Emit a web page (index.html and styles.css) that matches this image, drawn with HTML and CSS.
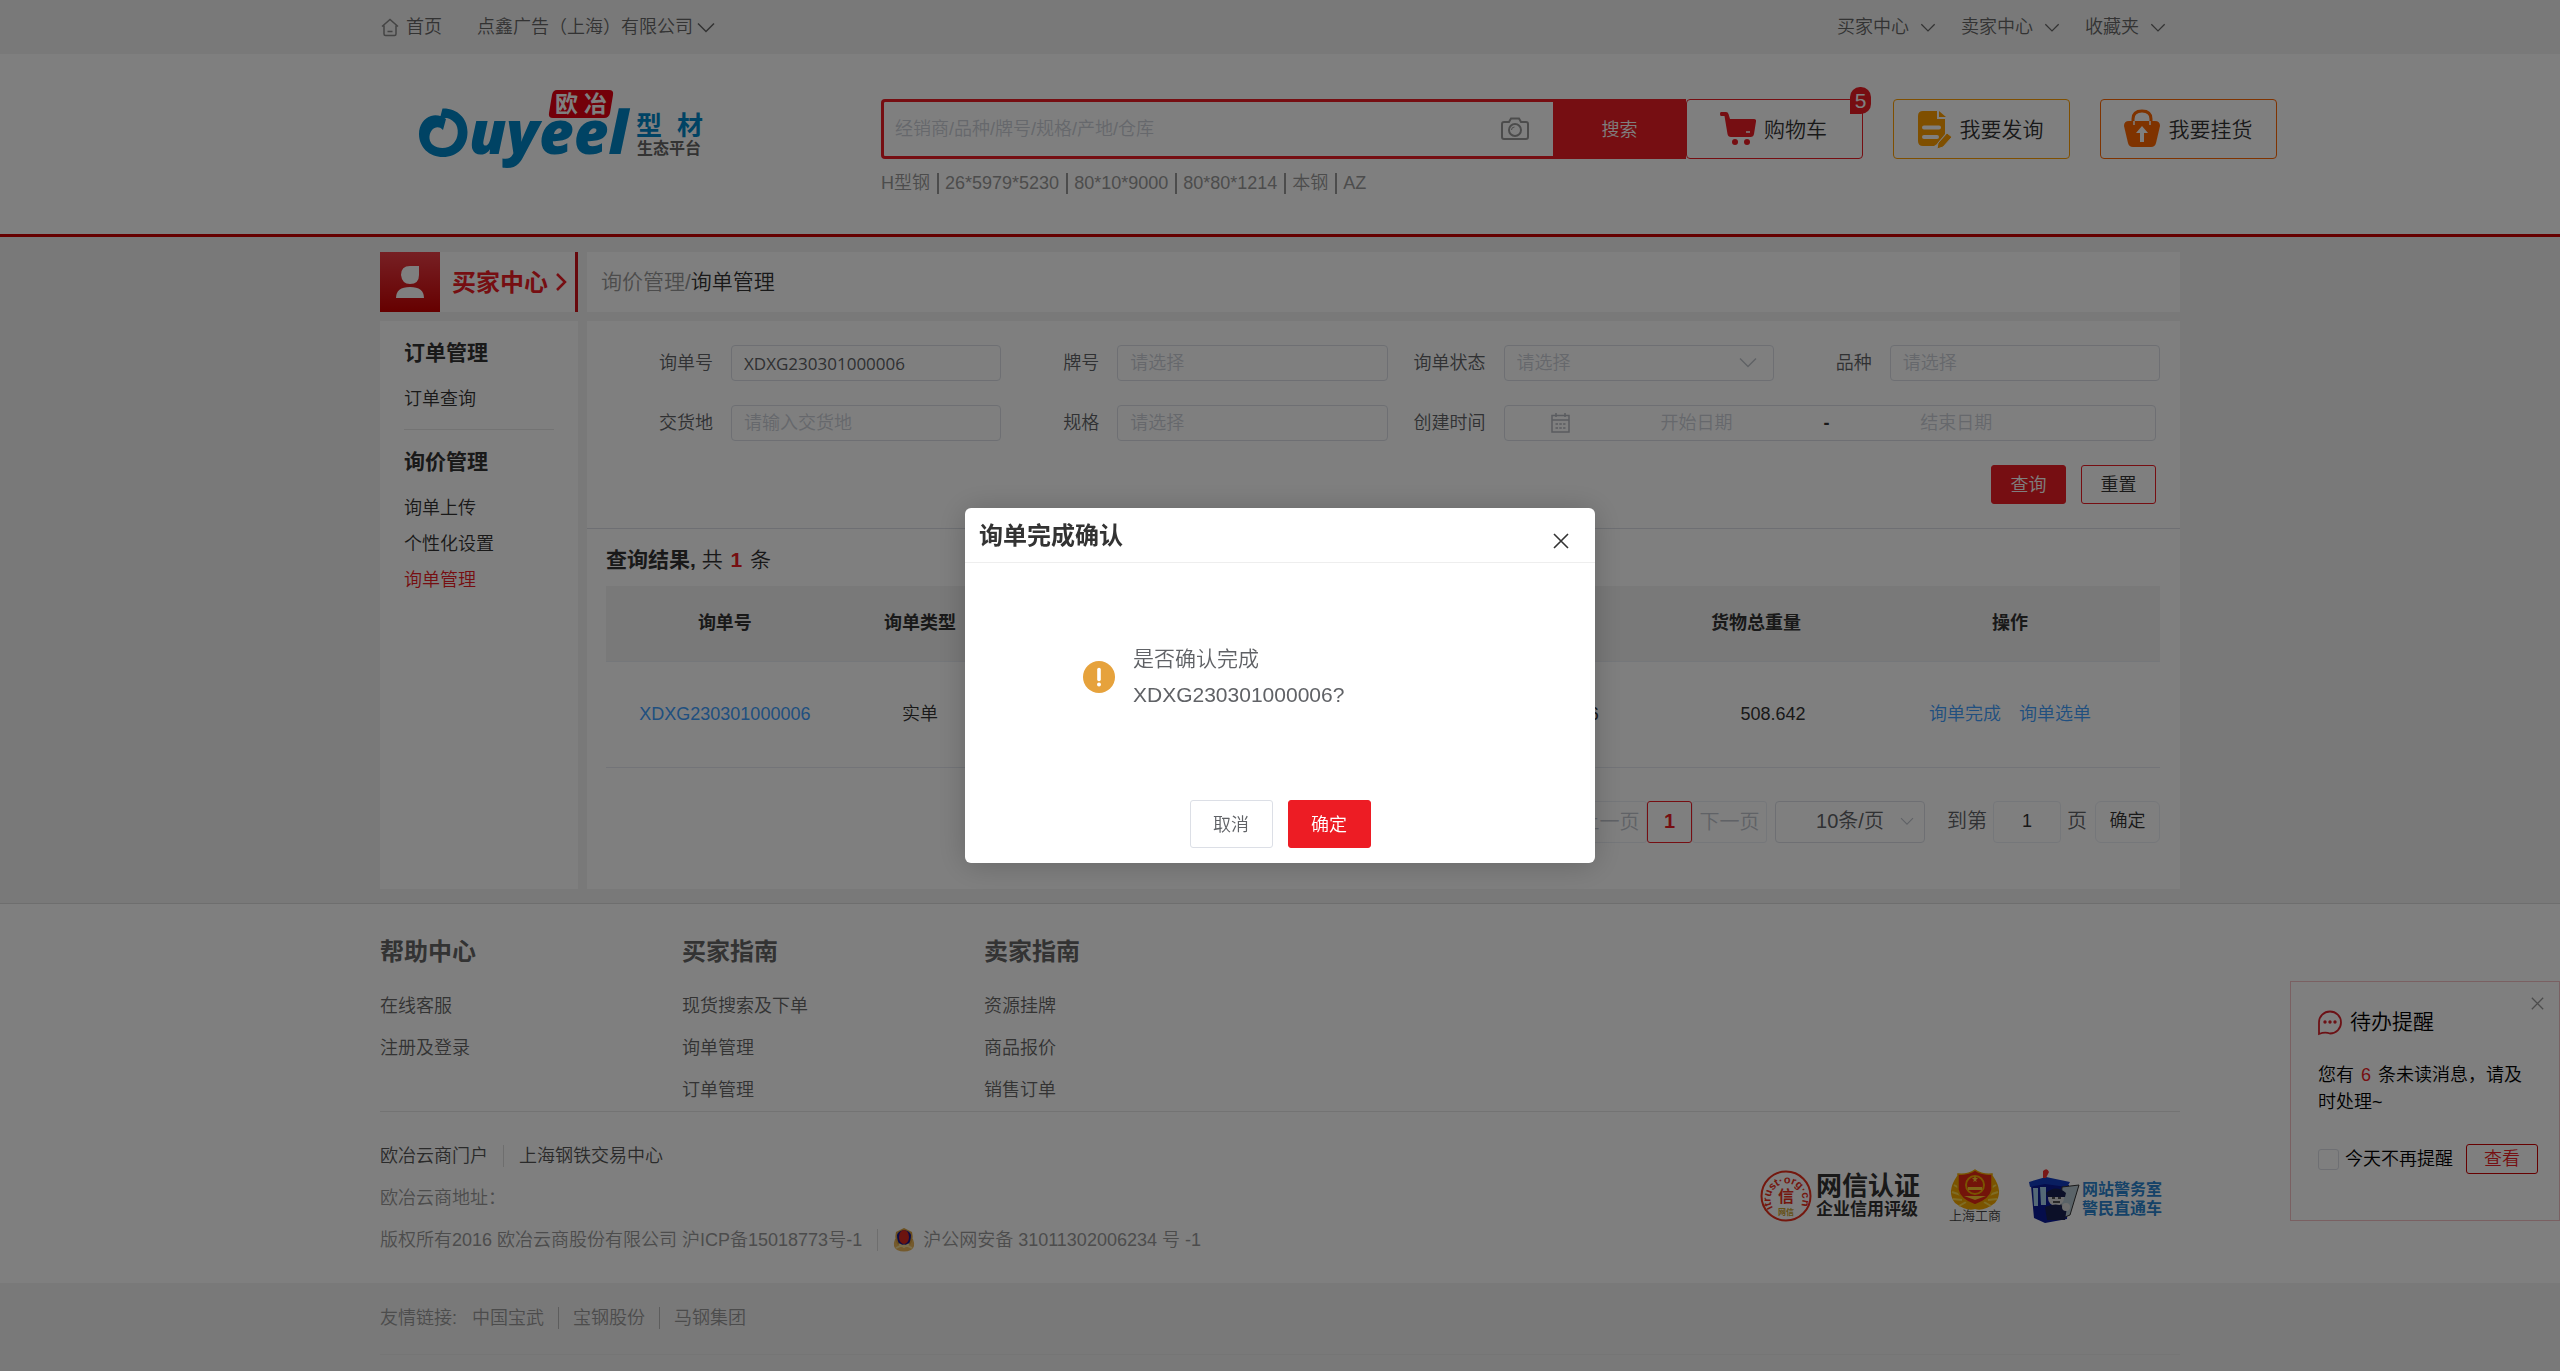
FILE: index.html
```html
<!DOCTYPE html>
<html lang="zh-CN">
<head>
<meta charset="utf-8">
<title>询单管理</title>
<link rel="stylesheet" href="styles.css">
</head>
<body>
<svg class="defs" width="0" height="0" aria-hidden="true">
  <symbol id="chevron" viewBox="0 0 18 12"><path d="M1 1.500l8 8 8-8" fill="none" stroke="currentColor" stroke-width="1.500"/></symbol>
  <symbol id="cross" viewBox="0 0 16 16"><path d="M1 1l14 14M15 1L1 15" fill="none" stroke="currentColor" stroke-width="1.600"/></symbol>
</svg>

<div class="topbar">
  <div class="wrap topbar-inner">
    <a class="top-link home" href="#">
      <svg width="18" height="19" viewBox="0 0 18 19" fill="none" stroke="#888" stroke-width="1.500"><path d="M1 8.500L9 1.500l8 7M3 7.500V16q0 1.500 1.500 1.500h9Q15 17.500 15 16V7.500M6.500 13.500h5"/></svg>首页</a>
    <a class="top-link company" href="#">点鑫广告（上海）有限公司<svg width="18" height="12"><use href="#chevron"/></svg></a>
    <nav class="top-right">
      <a class="top-link" href="#">买家中心<svg width="16" height="10"><use href="#chevron"/></svg></a>
      <a class="top-link" href="#">卖家中心<svg width="16" height="10"><use href="#chevron"/></svg></a>
      <a class="top-link" href="#">收藏夹<svg width="16" height="10"><use href="#chevron"/></svg></a>
    </nav>
  </div>
</div>

<header class="header">
  <div class="wrap header-inner">
    <a class="logo" href="#" aria-label="欧冶型材生态平台">
      <svg width="290" height="76" viewBox="0 0 290 76">
        <path d="M23.500 18.500C38 18 48.500 28 48.500 42 48.500 57 38 67 24 67 10 67 0 57 0 44 0 35 5 28 12 26 17 24 23 26 27 29l-3 11C20 36 16 37 13 40 9 45 10 52 14 55 19 59 29 59 34 54 40 48 40 38 36 33 32 28 27 27 21 28z" fill="#0087c8"/>
        <text x="50" y="64" font-family="Open Sans" font-weight="800" font-style="italic" font-size="60" fill="#0087c8">uyeel</text>
        <path d="M138 0h52q5 0 4 5l-3 18q-1 5-6 5h-51q-5 0-4-5l3-18q1-5 5-5z" fill="#e60012"/>
        <text x="136" y="22" class="cjk" font-size="23" fill="#fff">欧</text>
        <text x="165" y="22" class="cjk" font-size="23" fill="#fff">冶</text>
        <text x="217" y="45" class="cjk" font-size="26" fill="#0087c8">型</text>
        <text x="258" y="45" class="cjk" font-size="26" fill="#0087c8">材</text>
        <text x="218" y="64" class="cjk" font-size="16" fill="#666">生态平台</text>
      </svg>
    </a>
    <form class="search">
      <div class="search-row">
        <div class="search-box">
          <input type="text" aria-label="搜索" placeholder="经销商/品种/牌号/规格/产地/仓库">
          <svg width="28" height="24" viewBox="0 0 28 24" fill="none" stroke="#999" stroke-width="2"><path d="M3 5h5l2-3.500h8L20 5h5q2 0 2 2v13q0 2-2 2H3q-2 0-2-2V7q0-2 2-2z"/><circle cx="14" cy="13" r="6"/><path d="M10.500 13q0-3 3-3" stroke-width="1"/></svg>
        </div>
        <button type="button" class="search-btn">搜索</button>
      </div>
      <div class="keywords">
        <a href="#">H型钢</a><a href="#">26*5979*5230</a><a href="#">80*10*9000</a><a href="#">80*80*1214</a><a href="#">本钢</a><a href="#">AZ</a>
      </div>
    </form>
    <div class="actions">
      <button type="button" class="action cart">
        <svg width="36" height="34" viewBox="0 0 36 34" fill="#ed1c24"><path d="M1 0h5q2 0 2.500 2L10 7h24q2.500 0 2 2.500L34 22q-.5 3-3.500 3H11q-3 0-3.500-3L4.500 4H1Q0 4 0 2t1-2z"/><path d="M26 20h4" stroke="#fff" stroke-width="1.500"/><circle cx="15" cy="30" r="3"/><circle cx="27" cy="30" r="3"/></svg>购物车<span class="badge">5</span></button>
      <button type="button" class="action inquiry">
        <svg width="34" height="37" viewBox="0 0 34 37"><path d="M5 0h14v8h8v15l-8 10-3 2H5q-5 0-5-5V5q0-5 5-5zM21 0l7 6h-7z" fill="#ff9f00"/><path d="M6 16.500h15M6 26h13" stroke="#fff" stroke-width="4" stroke-linecap="round"/><path d="M29 22l5 4-9 10-6 2 1-6z" fill="#ff9f00" stroke="#fff" stroke-width="1"/></svg>我要发询</button>
      <button type="button" class="action listing">
        <svg width="38" height="38" viewBox="0 0 38 38"><path d="M10 17V9q0-8 9-8t9 8v8" fill="none" stroke="#f60" stroke-width="3"/><path d="M6 11h26q5 0 5 5l-4 17q-1 4-5 4H10q-4 0-5-4L1 16q0-5 5-5z" fill="#f60"/><path d="M11 11v4M27 11v4" stroke="#fff" stroke-width="1.500"/><path d="M19 16l6 7h-4v9h-4v-9h-4z" fill="#fff"/></svg>我要挂货</button>
    </div>
  </div>
</header>

<div class="wrap page">
  <div class="col-side">
    <a class="center-title" href="#">
      <span class="avatar"><svg width="30" height="32" viewBox="0 0 30 32" fill="#fff"><path d="M15 0h9v9q0 9-9 9-8 0-9-9Q6 0 15 0zM1 32q0-11 14-11t14 11z"/></svg></span>
      <span class="center-text">买家中心</span>
      <svg width="12" height="18" viewBox="0 0 12 18"><path d="M2 1l8 8-8 8" fill="none" stroke="#ed1c24" stroke-width="2.500"/></svg>
    </a>
    <nav class="sidebar">
      <h2>订单管理</h2>
      <a href="#">订单查询</a>
      <hr>
      <h2>询价管理</h2>
      <a href="#">询单上传</a>
      <a href="#">个性化设置</a>
      <a href="#" class="active">询单管理</a>
    </nav>
  </div>

  <main class="col-main">
    <div class="crumb"><a href="#">询价管理</a>/<span>询单管理</span></div>
    <section class="panel">
      <form class="filter">
        <div class="field"><label for="no">询单号</label><input id="no" type="text" class="latin" value="XDXG230301000006"></div>
        <div class="field"><label for="brand">牌号</label><input id="brand" type="text" placeholder="请选择"></div>
        <div class="field"><label for="state">询单状态</label><div class="select"><select id="state"><option>请选择</option></select><svg width="18" height="12"><use href="#chevron"/></svg></div></div>
        <div class="field"><label for="kind">品种</label><input id="kind" type="text" placeholder="请选择"></div>
        <div class="field"><label for="place">交货地</label><input id="place" type="text" placeholder="请输入交货地"></div>
        <div class="field"><label for="spec">规格</label><input id="spec" type="text" placeholder="请选择"></div>
        <div class="field wide"><label for="from">创建时间</label>
          <div class="range">
            <svg width="19" height="20" viewBox="0 0 19 20" fill="none" stroke="#b4b8c0" stroke-width="1.500"><path d="M1 2.500h17v16.500H1zM1 7h17M5 0v4M14 0v4"/><path d="M4.500 11h10M4.500 15h10" stroke-dasharray="2.500 1.300"/></svg>
            <input id="from" type="text" placeholder="开始日期"><span>-</span><input type="text" aria-label="结束日期" placeholder="结束日期">
          </div>
        </div>
        <div class="filter-buttons">
          <button type="button" class="btn primary">查询</button>
          <button type="button" class="btn outline">重置</button>
        </div>
      </form>
      <div class="results">
        <p class="summary"><b>查询结果,</b> 共 <b class="count">1</b> 条</p>
        <table>
          <colgroup><col class="c-no"><col class="c-type"><col class="c-mid"><col class="c-weight"><col class="c-op"></colgroup>
          <thead><tr><th>询单号</th><th>询单类型</th><th></th><th>货物总重量</th><th>操作</th></tr></thead>
          <tbody><tr><td><a href="#">XDXG230301000006</a></td><td>实单</td><td class="mid">6</td><td class="weight">508.642</td><td><span class="ops"><a href="#">询单完成</a><a href="#">询单选单</a></span></td></tr></tbody>
        </table>
        <div class="pager">
          <button type="button" class="step" disabled>上一页</button><button type="button" class="current">1</button><button type="button" class="step" disabled>下一页</button>
          <div class="select size"><select aria-label="每页条数"><option>10条/页</option></select><svg width="14" height="9"><use href="#chevron"/></svg></div>
          <label for="goto">到第</label><input id="goto" type="text" value="1"><span>页</span>
          <button type="button" class="go">确定</button>
        </div>
      </div>
    </section>
  </main>
</div>

<footer class="footer">
  <div class="wrap">
    <div class="guides">
      <div><h3>帮助中心</h3><a href="#">在线客服</a><a href="#">注册及登录</a></div>
      <div><h3>买家指南</h3><a href="#">现货搜索及下单</a><a href="#">询单管理</a><a href="#">订单管理</a></div>
      <div><h3>卖家指南</h3><a href="#">资源挂牌</a><a href="#">商品报价</a><a href="#">销售订单</a></div>
    </div>
    <div class="legal">
      <div class="legal-text">
        <p class="dark"><a href="#">欧冶云商门户</a><i></i><a href="#">上海钢铁交易中心</a></p>
        <p>欧冶云商地址：</p>
        <p>版权所有2016 欧冶云商股份有限公司 沪ICP备15018773号-1<i></i>
          <svg class="police" width="22" height="24" viewBox="0 0 22 24"><path d="M2 11Q-1 19 4 22q7 3 14 0 5-3 2-11z" fill="#e8b45a"/><path d="M11 0l8 4q2 8-2 13H5Q1 12 3 4z" fill="#d8a040"/><path d="M11 2q6 1 7 5 0 6-3 10H7Q4 13 4 7q1-4 7-5z" fill="#16168c"/><ellipse cx="11" cy="9" rx="5" ry="7" fill="#d8281e"/><path d="M6 16l5 3 5-3M3 20q8-5 16 0" fill="none" stroke="#f5dc96" stroke-width="2"/></svg>沪公网安备 31011302006234 号 -1</p>
      </div>
      <div class="certs">
        <svg width="162" height="52" viewBox="0 0 162 52">
          <circle cx="26" cy="26" r="24.500" fill="none" stroke="#e8301c" stroke-width="2"/>
          <path id="arc" d="M13 38A16 16 0 1 1 40 38" fill="none"/>
          <text font-family="Liberation Sans" font-size="11" font-weight="700" fill="#e8301c"><textPath href="#arc">itrust·org·cn</textPath></text>
          <text x="18" y="32" class="cjk" font-size="16" fill="#e8301c">信</text>
          <text x="18" y="45" class="cjk" font-size="8" fill="#c9a02a">网信</text>
          <text x="56" y="25" class="cjk" font-size="26" fill="#333">网信认证</text>
          <text x="56" y="45" class="cjk" font-size="17" fill="#333">企业信用评级</text>
        </svg>
        <svg width="54" height="52" viewBox="0 0 54 52">
          <path d="M9 6Q-2 22 7 33q12 9 20 6 8 3 20-6 9-11-2-27z" fill="#f5a800"/>
          <path d="M6 15l7 4M4 22l9 3M5 29l9 1M11 36l7-4M48 15l-7 4M50 22l-9 3M49 29l-9 1M43 36l-7-4" stroke="#ffd94a" stroke-width="2"/>
          <path d="M27 0q7 5 17 4v16Q42 30 27 35 12 30 10 20V4q10 1 17-4z" fill="#e62814" stroke="#f5a800" stroke-width="1.500"/>
          <circle cx="27" cy="15" r="9" fill="none" stroke="#f5a800" stroke-width="2"/><path d="M20 17h14v3H20zM26 8l1-2 1 2h2l-2 2 1 2-2-1-2 1 1-2-2-2zM16 26l11 4 11-4" fill="#ffc830"/>
          <text x="1" y="50" class="song" font-size="13" fill="#444">上海工商</text>
        </svg>
        <svg width="136" height="54" viewBox="0 0 136 54">
          <path d="M3 16l16-5 22 4-2 34-22 4-11-5z" fill="#0a1a96"/><path d="M1 12L18 7l24 5-3 5-22-3-15 3z" fill="#123cc0"/>
          <path d="M5 18h5v18H6zM12 17h6v18h-5z" fill="#a8d2ec"/><path d="M34 17l17-2-9 30-10 4z" fill="#b4c6d0" stroke="#333" stroke-width="1"/>
          <path d="M15 1q4-4 6 1l-3 6h-3z" fill="#f03030"/><circle cx="28" cy="28" r="8" fill="#ddd"/><path d="M18 23q10-9 20 0l-1 4H20z" fill="#182050"/><path d="M17 37q10-5 22 0l-2 13H19z" fill="#182050"/><path d="M24 28h3M30 28h3M25 32h7" stroke="#222" stroke-width="1.500"/><circle cx="38" cy="37" r="4" fill="#ddd"/>
          <text x="54" y="25" class="cjk" font-size="16" fill="#2b85d0">网站警务室</text>
          <text x="54" y="44" class="cjk" font-size="16" fill="#2b85d0">警民直通车</text>
        </svg>
      </div>
    </div>
  </div>
</footer>
<div class="friends">
  <div class="wrap"><p>友情链接:<a href="#" class="first">中国宝武</a><i></i><a href="#">宝钢股份</a><i></i><a href="#">马钢集团</a></p></div>
</div>

<aside class="notice">
  <button type="button" class="notice-close" aria-label="关闭提醒"><svg width="13" height="13"><use href="#cross"/></svg></button>
  <h4><svg width="24" height="25" viewBox="0 0 24 25"><path d="M1 24V12.500A11 11 0 1 1 12 23.500q-5-2-11 .5z" fill="none" stroke="#d9232b" stroke-width="1.800"/><g fill="#d9232b"><circle cx="7" cy="12" r="1.700"/><circle cx="12" cy="12" r="1.700"/><circle cx="17" cy="12" r="1.700"/></g></svg>待办提醒</h4>
  <p>您有 <em>6</em> 条未读消息，请及时处理~</p>
  <div class="notice-foot"><input type="checkbox" id="mute"><label for="mute">今天不再提醒</label><button type="button">查看</button></div>
</aside>

<div class="shade">
  <div class="dialog" role="dialog" aria-labelledby="dlg-title">
    <div class="dialog-head"><h1 id="dlg-title">询单完成确认</h1><button type="button" class="dialog-close" aria-label="关闭"><svg width="16" height="16"><use href="#cross"/></svg></button></div>
    <div class="dialog-body">
      <svg width="32" height="32" viewBox="0 0 32 32"><circle cx="16" cy="16" r="16" fill="#e6a23c"/><path d="M16 8.500v10" stroke="#fff" stroke-width="3.600" stroke-linecap="round"/><circle cx="16" cy="23.500" r="2" fill="#fff"/></svg>
      <p>是否确认完成<br>XDXG230301000006?</p>
    </div>
    <div class="dialog-foot"><button type="button" class="cancel">取消</button><button type="button" class="confirm">确定</button></div>
  </div>
</div>
</body>
</html>
```
FILE: styles.css
```css
* { box-sizing: border-box; }
body {
  margin: 0;
  min-height: 100vh;
  background: #f2f2f2;
  color: #333;
  font: 350 18px/27px "Liberation Sans", "Noto Sans CJK SC", sans-serif;
}
h1, h2, h3, h4, p { margin: 0; }
a { color: inherit; text-decoration: none; }
button, input, select { font: inherit; color: inherit; margin: 0; }
button { padding: 2px 0 0; background: #fff; border: 1px solid #dcdfe6; border-radius: 3px; }
input::placeholder { color: #ccd0d8; opacity: 1; }
svg { display: block; flex: none; overflow: visible; }
.defs { position: absolute; }
.cjk { font-family: "Noto Sans CJK SC", sans-serif; font-weight: 700; }
.song { font-family: "Liberation Serif", "Noto Sans CJK SC", serif; }
.wrap { max-width: 1800px; margin: 0 auto; }

/* top bar */
.topbar { color: #666; }
.topbar-inner { display: flex; align-items: center; height: 54px; padding-top: 1px; }
.top-link { display: flex; align-items: center; gap: 11px; white-space: nowrap; }
.home { gap: 7px; padding-left: 1px; }
.company { gap: 4px; margin-left: 35px; }
.top-right { display: flex; gap: 25px; margin-left: auto; padding-right: 14px; }

/* header */
.header { background: #fff; border-bottom: 3px solid #c00; }
.header-inner { display: flex; align-items: flex-start; height: 180px; padding-top: 36px; }
.logo { flex: 0 0 501px; padding-left: 39px; }
.search { flex: 0 0 805px; padding-top: 9px; }
.search-row { display: flex; }
.search-box {
  display: flex;
  align-items: center;
  flex: 1;
  height: 60px;
  padding: 0 24px 0 11px;
  border: 3px solid #ed1c24;
  border-right: 0;
  border-radius: 4px 0 0 4px;
}
.search-box input { flex: 1; min-width: 0; border: 0; padding: 0; background: none; outline: 0; }
.search-btn { width: 133px; background: #ed1c24; color: #fff; border: 0; border-radius: 0; }
.keywords { display: flex; align-items: center; margin-top: 14px; color: #999; }
.keywords a { line-height: 21px; }
.keywords a + a { margin-left: 7px; padding-left: 6px; border-left: 2px solid #999; }
.actions { display: flex; gap: 30px; padding-top: 9px; }
.action {
  position: relative;
  display: flex;
  align-items: center;
  justify-content: center;
  gap: 8px;
  width: 177px;
  height: 60px;
  padding: 0 2px 0 0;
  border-radius: 4px;
  font-size: 21px;
  white-space: nowrap;
}
.cart { border-color: #ed1c24; }
.inquiry { border-color: #ff9f00; }
.listing { border-color: #f60; }
.badge {
  position: absolute;
  top: -13px;
  right: -9px;
  width: 21px;
  border-radius: 10px 10px 10px 0;
  background: #ed1c24;
  color: #fff;
}

/* page columns */
.page { display: flex; gap: 9px; padding: 15px 0 14px; }
.col-side { display: flex; flex-direction: column; gap: 9px; flex: 0 0 198px; }
.col-main { display: flex; flex-direction: column; gap: 9px; flex: 1; min-width: 0; }
.center-title {
  display: flex;
  align-items: center;
  height: 60px;
  background: #fff;
  border-right: 3px solid #d01018;
  color: #ed1c24;
  font-size: 24px;
  font-weight: 700;
}
.avatar {
  display: flex;
  align-items: center;
  justify-content: center;
  width: 60px;
  height: 60px;
  background: linear-gradient(#ee4048, #c00);
}
.center-text { margin: 0 7px 0 12px; }
.sidebar { flex: 1; padding: 14px 24px; background: #fff; }
.sidebar h2 { font-size: 21px; line-height: 36px; }
.sidebar a { display: block; line-height: 36px; }
.sidebar h2 + a { margin-top: 10px; }
.sidebar hr { margin: 12px 0 14px; border: 0; border-top: 1px solid #e6e6e6; }
.sidebar .active { color: #ed1c24; }
.crumb { padding: 0 14px; background: #fff; color: #999; font-size: 21px; line-height: 60px; }
.crumb span { color: #333; }
.panel { flex: 1; padding-bottom: 46px; background: #fff; }

/* filter form */
.filter {
  display: grid;
  grid-template-columns: repeat(4, 1fr);
  row-gap: 24px;
  padding: 24px 20px 24px 28px;
  border-bottom: 1px solid #dcdfe6;
}
.field { display: flex; align-items: center; color: #606266; }
.field label { flex: 0 0 116px; padding-right: 18px; text-align: right; }
.field > input, .select, .range {
  flex: 1;
  min-width: 0;
  height: 36px;
  border: 1px solid #dcdfe6;
  border-radius: 4px;
  background: #fff;
}
.field > input { padding: 0 12px; }
.latin { font-family: "Open Sans", "Noto Sans CJK SC", sans-serif; font-size: 17px; font-weight: 400; }
.select { display: flex; align-items: center; padding-right: 16px; color: #c0c4cc; }
.select select { flex: 1; min-width: 0; appearance: none; border: 0; background: none; padding: 0 12px; }
.field .select select { color: #ccd0d8; }
.wide { grid-column: span 2; padding-right: 4px; }
.range { display: flex; align-items: center; padding-left: 46px; }
.range input { width: 42%; min-width: 0; border: 0; padding: 0; background: none; text-align: center; }
.range span { color: #333; font-weight: 700; }
.filter-buttons { grid-column: 1 / -1; display: flex; justify-content: flex-end; gap: 15px; padding-right: 4px; }
.btn { width: 75px; height: 39px; }
.primary { background: #ed1c24; border-color: #ed1c24; color: #fff; }
.outline { border-color: #ed1c24; }

/* results */
.results { padding: 13px 20px 0 19px; }
.summary { margin-bottom: 8px; font-size: 21px; line-height: 36px; }
.count { margin: 0 2px; color: #ed1c24; }
table { width: 100%; table-layout: fixed; border-collapse: collapse; text-align: center; }
th { height: 75px; padding: 0; background: #f2f2f2; border-bottom: 1px solid #ebeef5; }
td { height: 106px; padding: 0; border-bottom: 1px solid #e6e9f0; }
td a { color: #409eff; }
.c-no { width: 15.3%; }
.c-type { width: 9.8%; }
.c-weight { width: 13.4%; }
.c-op { width: 19.3%; }
.mid { text-align: right; padding-right: 53px; }
.weight { padding-left: 34px; }
.ops { display: flex; justify-content: center; gap: 18px; }
.pager { display: flex; align-items: center; justify-content: flex-end; margin-top: 33px; font-size: 20px; color: #606266; }
.pager button, .pager input, .size { height: 42px; }
.pager .step { width: 75px; color: #c0c4cc; border-color: #ebeef5; }
.pager .current { width: 45px; padding: 0; color: #ed1c24; border-color: #ed1c24; font-weight: 700; }
.size { flex: 0 0 150px; margin: 0 22px 0 8px; padding-right: 10px; }
.size select { padding: 0 0 0 24px; color: #606266; text-align: center; }
.pager input { width: 68px; margin: 0 6px; padding: 0; border: 1px solid #ebeef5; border-radius: 4px; font-size: 18px; text-align: center; color: #333; }
.pager .go { width: 65px; margin-left: 8px; padding: 0; border-color: #ebeef5; border-radius: 6px; font-size: 18px; color: #333; }

/* footer */
.footer { background: #fff; border-top: 1px solid #ddd; color: #666; }
.guides { display: flex; padding-top: 30px; border-bottom: 1px solid #e6e6e6; }
.guides div { flex: 0 0 302px; }
.guides h3 { margin-bottom: 15px; font-size: 24px; line-height: 36px; }
.guides a { display: block; line-height: 42px; }
.legal { display: flex; justify-content: space-between; padding: 23px 0 22px; color: #999; }
.legal p { display: flex; align-items: center; line-height: 42px; white-space: pre; }
.legal .dark { color: #555; }
.legal i, .friends i { width: 1px; height: 22px; margin: 0 15px; background: #ddd; }
.police { margin-right: 8px; }
.certs { display: flex; gap: 26px; margin-top: 35px; padding-right: 16px; }
.friends { color: #999; }
.friends p { display: flex; align-items: center; height: 72px; border-bottom: 1px solid #eaeaea; }
.friends i { margin: 0 14px; background: #bbb; }
.friends .first { margin-left: 15px; }

/* reminder */
.notice {
  position: fixed;
  right: 0;
  bottom: 150px;
  width: 270px;
  height: 240px;
  padding: 25px 21px 0 27px;
  border: 1px solid #f5c0c4;
  background: #fff;
  color: #000;
}
.notice h4 { display: flex; align-items: center; gap: 8px; font-size: 21px; font-weight: 350; line-height: 30px; }
.notice-close { position: absolute; top: 13px; right: 15px; border: 0; color: #999; }
.notice p { margin-top: 25px; }
.notice em { margin: 0 2px; font-style: normal; color: #ed1c24; }
.notice-foot { display: flex; align-items: center; margin-top: 28px; }
.notice-foot input { appearance: none; width: 21px; height: 21px; border: 1px solid #dcdfe6; border-radius: 3px; }
.notice-foot label { margin-left: 6px; white-space: nowrap; }
.notice-foot button { width: 72px; height: 30px; margin-left: auto; padding: 0; border-color: #c00; color: #ed1c24; }

/* confirmation dialog */
.shade {
  position: fixed;
  inset: 0;
  display: flex;
  align-items: center;
  justify-content: center;
  background: rgba(0, 0, 0, .5);
}
.dialog { width: 630px; border-radius: 6px; background: #fff; box-shadow: 0 2px 30px rgba(0, 0, 0, .2); }
.dialog-head { display: flex; justify-content: space-between; height: 55px; padding: 10px 26px 0 14px; border-bottom: 1px solid #eee; }
.dialog-head h1 { font-size: 24px; line-height: 36px; }
.dialog-close { align-self: center; border: 0; background: none; }
.dialog-body { display: flex; align-items: center; gap: 18px; padding: 78px 118px 87px; color: #606266; font-size: 21px; line-height: 36px; }
.dialog-foot { display: flex; justify-content: center; gap: 15px; padding-bottom: 15px; }
.dialog-foot button { width: 83px; height: 48px; }
.cancel { color: #606266; }
.dialog-foot .confirm { background: #ed1c24; border-color: #ed1c24; color: #fff; }
```
